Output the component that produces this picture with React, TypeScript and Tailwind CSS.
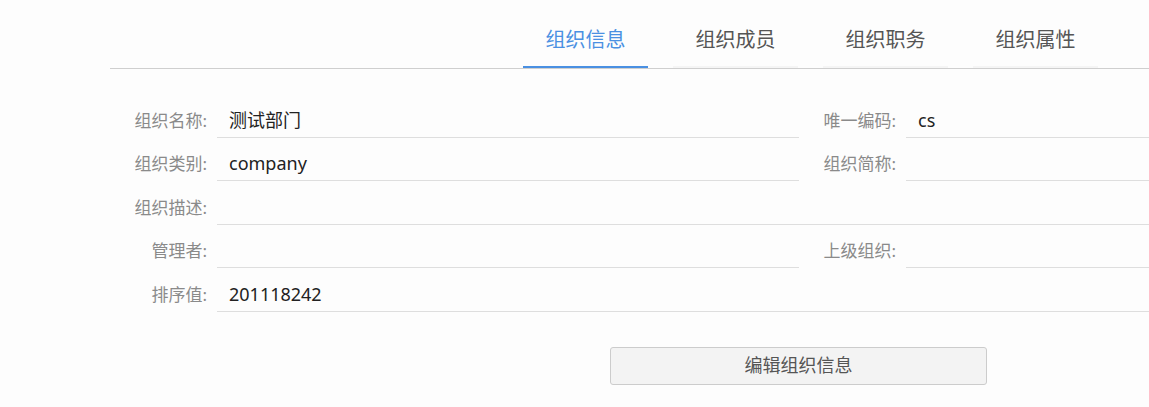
import React from 'react';

const tabs = ['组织信息', '组织成员', '组织职务', '组织属性'];

type Field = { label: string; value?: string };

const rows: (Field | [Field, Field])[] = [
  [{ label: '组织名称:', value: '测试部门' }, { label: '唯一编码:', value: 'cs' }],
  [{ label: '组织类别:', value: 'company' }, { label: '组织简称:' }],
  { label: '组织描述:' },
  [{ label: '管理者:' }, { label: '上级组织:' }],
  { label: '排序值:', value: '201118242' },
];

const Cell: React.FC<{ field: Field; className?: string }> = ({ field, className = '' }) => (
  <div className={`flex items-end ${className}`}>
    <div className="w-[97px] h-[34px] shrink-0 flex items-center justify-end text-[17px] text-[#8a8a8a]">
      {field.label}
    </div>
    <div className="ml-[10px] flex-1 h-[34px] border-b border-[#dedede] flex items-center pl-3 text-[18px] text-[#222]">
      {field.value}
    </div>
  </div>
);

export default function App() {
  const font = { fontFamily: '"Noto Sans", "Noto Sans CJK SC", sans-serif' };
  return (
    <div className="w-screen h-[407px] overflow-hidden bg-[#fdfdfd]" style={font}>
      <div className="ml-[110px] w-[1377px]">
        {/* Tabs */}
        <div className="pt-[15px] border-b border-[#cfcfcf]">
          <div className="flex gap-[25px] pl-[413px]">
            {tabs.map((t, i) => (
              <div
                key={t}
                className={`w-[125px] h-[53px] pb-[2px] flex items-center justify-center text-[20px] border-b-2 ${
                  i === 0 ? 'text-[#4a90e2] border-[#4a90e2]' : 'text-[#555] border-[#f5f5f5]'
                }`}
              >
                {t}
              </div>
            ))}
          </div>
        </div>

        {/* Form */}
        <div className="pt-[25px]">
          {rows.map((r, i) =>
            Array.isArray(r) ? (
              <div key={i} className="h-[43.5px] flex items-end">
                <Cell field={r[0]} className="w-[689px]" />
                <Cell field={r[1]} className="flex-1" />
              </div>
            ) : (
              <div key={i} className="h-[43.5px] flex items-end">
                <Cell field={r} className="flex-1" />
              </div>
            )
          )}
        </div>

        <div className="mt-[35px] flex justify-center">
          <button className="w-[377px] h-[38px] rounded-[3px] border border-[#cccccc] bg-[#f3f3f3] text-[18px] text-[#555]">
            编辑组织信息
          </button>
        </div>
      </div>
    </div>
  );
}
